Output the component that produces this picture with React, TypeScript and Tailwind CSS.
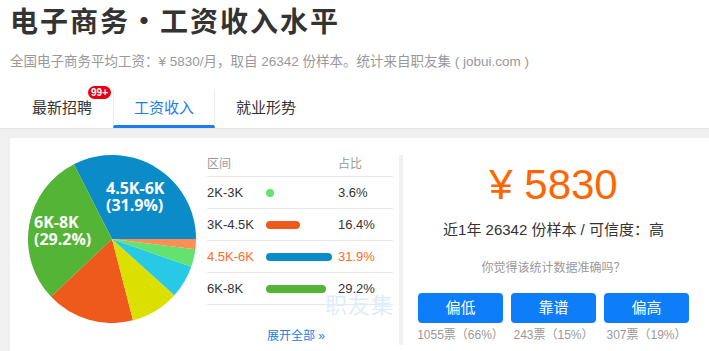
import React from 'react';

interface Slice {
  from: number;
  to: number;
  color: string;
}

// angles in degrees, counter-clockwise from 3 o'clock
const slices: Slice[] = [
  { from: 0, to: 117, color: '#0b8bc7' },
  { from: 117, to: 223.5, color: '#54b435' },
  { from: 223.5, to: 284.5, color: '#ee5a1b' },
  { from: 284.5, to: 318, color: '#dce000' },
  { from: 318, to: 340.7, color: '#27c9e4' },
  { from: 340.7, to: 353, color: '#63e26f' },
  { from: 353, to: 360, color: '#ff8e52' },
];

const rows = [
  { range: '2K-3K', pct: 3.6, color: '#63e26f', hot: false },
  { range: '3K-4.5K', pct: 16.4, color: '#ee5a1b', hot: false },
  { range: '4.5K-6K', pct: 31.9, color: '#0b8bc7', hot: true },
  { range: '6K-8K', pct: 29.2, color: '#54b435', hot: false },
];

const votes = [
  { label: '偏低', count: '1055票（66%）' },
  { label: '靠谱', count: '243票（15%）' },
  { label: '偏高', count: '307票（19%）' },
];

const R = 84;

function point(deg: number) {
  const a = (deg * Math.PI) / 180;
  return `${(R + R * Math.cos(a)).toFixed(2)} ${(R - R * Math.sin(a)).toFixed(2)}`;
}

function Pie() {
  return (
    <svg width="168" height="168" viewBox="0 0 168 168" className="shrink-0">
      {slices.map((s, i) => (
        <path
          key={i}
          d={`M ${R} ${R} L ${point(s.from)} A ${R} ${R} 0 ${s.to - s.from > 180 ? 1 : 0} 0 ${point(s.to)} Z`}
          fill={s.color}
        />
      ))}
      <g fill="#fff" fontFamily="'Open Sans', 'DejaVu Sans', sans-serif" fontWeight="700" fontSize="16">
        <text x="78" y="39">4.5K-6K</text>
        <text x="78" y="56">(31.9%)</text>
        <text x="6" y="73">6K-8K</text>
        <text x="6" y="90">(29.2%)</text>
      </g>
    </svg>
  );
}

export default function App() {
  return (
    <div className="w-[709px] h-[351px] overflow-hidden bg-white text-[#333] font-['Liberation_Sans','Noto_Sans_CJK_SC',sans-serif]">
      <div className="px-[10px] pt-[3px]">
        <h1 className="text-[28px] leading-[34px] font-bold tracking-[2px] text-[#333] font-['Noto_Sans_CJK_SC',sans-serif]">
          电子商务・工资收入水平
        </h1>
        <p className="mt-[16px] text-[13.5px] leading-[17px] text-[#999]">
          全国电子商务平均工资：¥ 5830/月，取自 26342 份样本。统计来自职友集 ( jobui.com )
        </p>
      </div>

      <div className="mt-[19px] flex pl-[11px] border-b border-[#e3e3e3]">
        <div className="relative w-[102px] h-[39px] flex items-center justify-center text-[15px] text-[#333]">
          最新招聘
          <span className="absolute -top-[3px] right-[2px] h-[13px] w-[23px] rounded-full bg-[#e60012] text-white text-[10px] font-bold leading-[13px] text-center">
            99+
          </span>
        </div>
        <div className="w-[102px] h-[39px] flex items-center justify-center text-[15px] text-[#1a7ef2] border-x border-[#ececec] border-b-[3px] border-b-[#1a7ef2] pt-[3px]">
          工资收入
        </div>
        <div className="w-[102px] h-[39px] flex items-center justify-center text-[15px] text-[#333]">
          就业形势
        </div>
      </div>

      <div className="bg-[#f0f0f0] pt-[9px] pl-[10px]">
        <div className="bg-white flex h-[260px]">
          <div className="relative flex w-[389px] pt-[17px] pl-[18px] gap-[11px]">
            <Pie />
            <div className="w-[186px]">
              <div className="flex h-[22px] border-b border-[#e8e8e8] text-[12px] leading-[18px] text-[#999]">
                <span className="w-[131px]">区间</span>
                <span>占比</span>
              </div>
              {rows.map((r) => (
                <div
                  key={r.range}
                  className={`flex items-center h-[32px] border-b border-[#e8e8e8] text-[13px] ${
                    r.hot ? 'text-[#ff6a2b]' : 'text-[#333]'
                  }`}
                >
                  <span className="w-[59px]">{r.range}</span>
                  <span className="w-[72px] flex">
                    <span
                      className="h-[8px] rounded-full"
                      style={{ width: `${Math.max(r.pct * 2.07, 8)}px`, backgroundColor: r.color }}
                    />
                  </span>
                  <span>{r.pct}%</span>
                </div>
              ))}
              <div className="mt-[24px] text-center text-[12px] leading-[14px] text-[#1f7fe0] pr-[8px]">
                展开全部 »
              </div>
            </div>
            <span className="absolute left-[315px] top-[152px] text-[22px] leading-[26px] text-[#dfecfb] tracking-[1px] font-['Noto_Sans_CJK_SC',sans-serif]">
              职友集
            </span>
          </div>

          <div className="w-[4px] bg-[#f0f0f0] mt-[17px] h-[190px]" />

          <div className="flex-1 pl-[15px] pr-[20px] pt-[24px] text-center">
            <div className="text-[42px] leading-[46px] text-[#ff6600]">¥ 5830</div>
            <div className="mt-[12px] text-[15px] leading-[20px] text-[#333]">
              近1年 26342 份样本 / 可信度：高
            </div>
            <div className="mt-[20px] text-[12px] leading-[16px] text-[#999]">你觉得该统计数据准确吗？</div>
            <div className="mt-[17px] flex gap-[8px]">
              {votes.map((v) => (
                <div key={v.label} className="w-[85px] flex flex-col items-center">
                  <div className="w-full h-[30px] rounded-[4px] bg-[#0d7dfa] text-white text-[15px] flex items-center justify-center">
                    {v.label}
                  </div>
                  <div className="mt-[4px] text-[12px] leading-[16px] text-[#999] whitespace-nowrap">{v.count}</div>
                </div>
              ))}
            </div>
          </div>
        </div>
      </div>
    </div>
  );
}
